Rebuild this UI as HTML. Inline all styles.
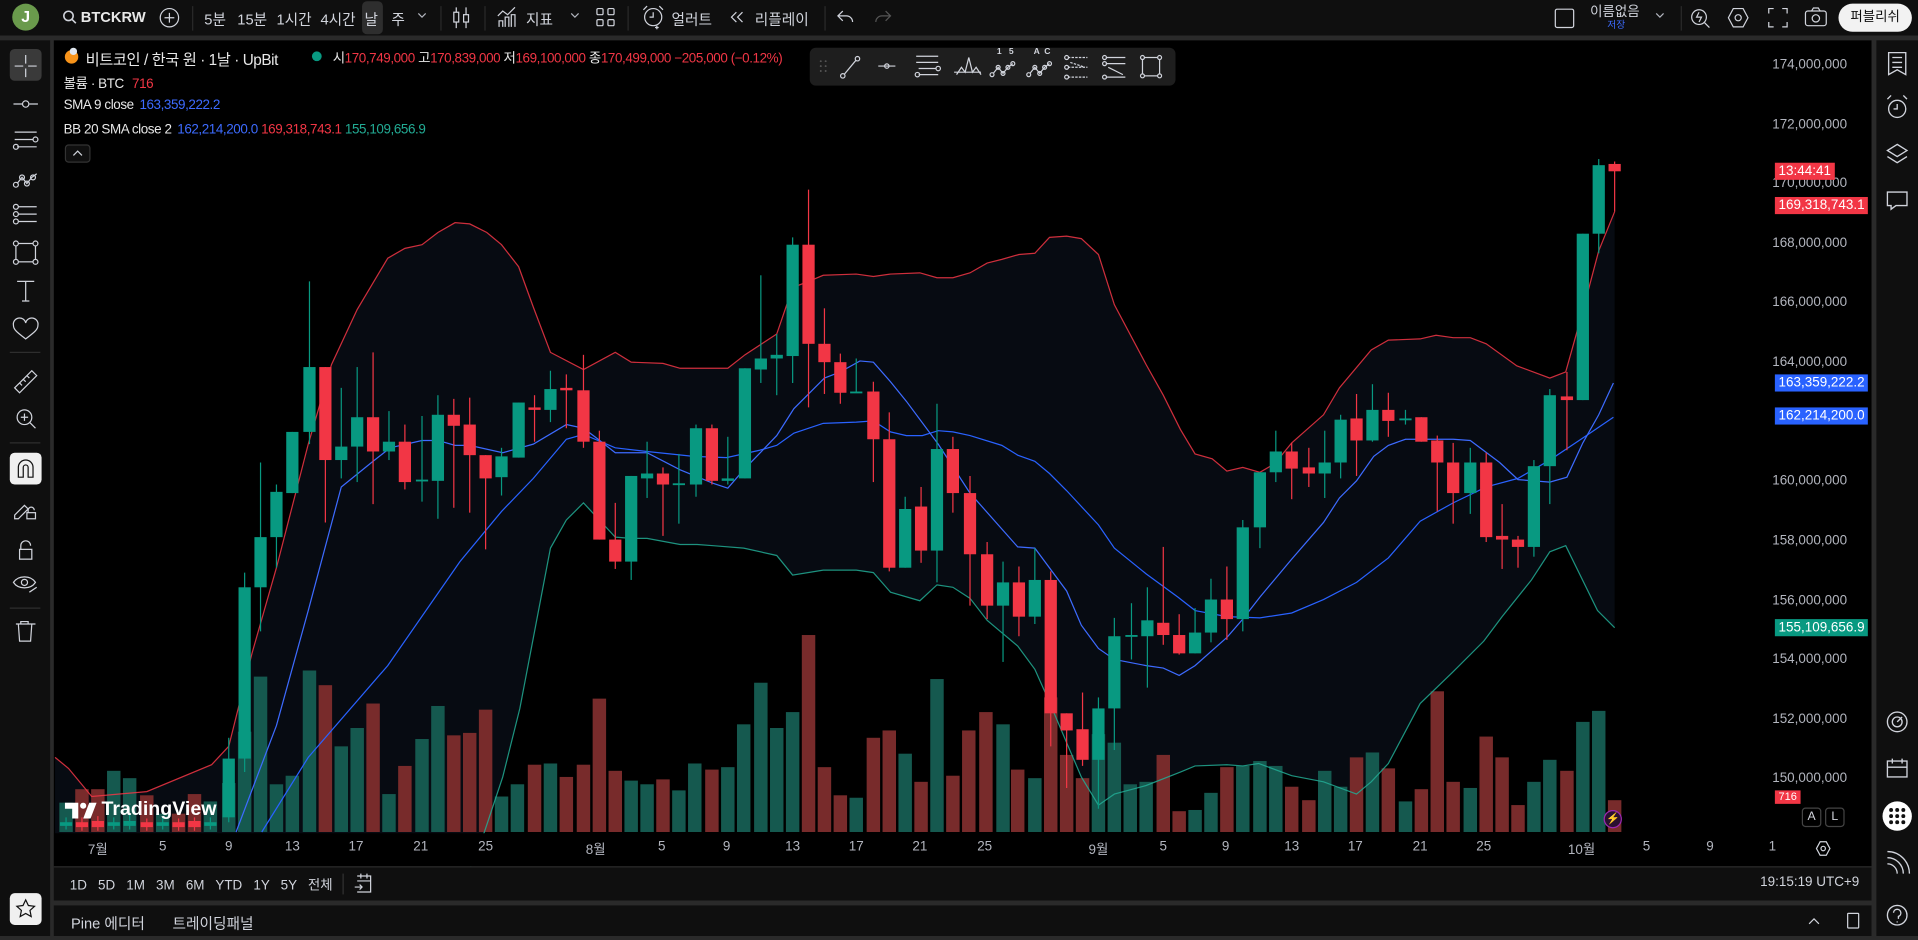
<!DOCTYPE html>
<html><head><meta charset="utf-8">
<style>
*{box-sizing:border-box;margin:0;padding:0}
html,body{width:1918px;height:936px;overflow:hidden;background:#2a2a2a}
#root{position:absolute;left:0;top:0;width:1568px;height:765px;transform:scale(1.22321,1.22353);transform-origin:0 0;background:#2a2a2a;font-family:"Liberation Sans","Noto Sans CJK KR",sans-serif;color:#d1d4dc;font-size:12px}
.abs{position:absolute}
.top{left:0;top:0;width:1568px;height:29px;background:#0f0f0f}
.left{left:0;top:33px;width:41px;height:732px;background:#0f0f0f}
.right{left:1534px;top:33px;width:34px;height:732px;background:#0f0f0f}
.chart{left:44px;top:33px;width:1486px;height:675px;background:#000;overflow:hidden}
.bbar{left:44px;top:708px;width:1486px;height:28px;background:#0f0f0f;border-top:1px solid #2a2a2a}
.panel{left:44px;top:740px;width:1486px;height:25px;background:#0f0f0f}
.t{position:absolute;white-space:nowrap}
.pl{position:absolute;right:20px;font-size:11px;color:#b2b5be;text-align:right}
.badge{position:absolute;left:1451px;height:14px;font-size:11px;color:#fff;padding:0 3px;line-height:14px}
.tl{position:absolute;top:686px;font-size:11px;color:#b2b5be;transform:translateX(-50%)}
.sep{position:absolute;width:1px;height:20px;background:#2a2a2a;top:5px}
.lg{letter-spacing:-0.35px}
</style></head><body><div id="root">

<!-- TOP BAR -->
<div class="abs top">
 <div class="abs" style="left:10px;top:3px;width:22px;height:22px;border-radius:50%;background:#6a9a4c;color:#fff;font-size:13px;text-align:center;line-height:22px;font-weight:bold">J</div>
 <svg class="abs" style="left:51px;top:8px" width="12" height="12" viewBox="0 0 12 12"><circle cx="5" cy="5" r="3.8" fill="none" stroke="#d1d4dc" stroke-width="1.3"/><path d="M8 8l3 3" stroke="#d1d4dc" stroke-width="1.3"/></svg>
 <div class="t" style="left:66px;top:7px;font-weight:bold;font-size:12px;color:#e8e8e8">BTCKRW</div>
 <svg class="abs" style="left:130px;top:6px" width="17" height="17" viewBox="0 0 17 17"><circle cx="8.5" cy="8.5" r="7.5" fill="none" stroke="#d1d4dc"/><path d="M8.5 4.5v8M4.5 8.5h8" stroke="#d1d4dc"/></svg>
 <div class="sep" style="left:157px"></div>
 <div class="t" style="left:167px;top:7px">5분</div>
 <div class="t" style="left:194px;top:7px">15분</div>
 <div class="t" style="left:226px;top:7px">1시간</div>
 <div class="t" style="left:262px;top:7px">4시간</div>
 <div class="abs" style="left:296px;top:1px;width:17px;height:27px;background:#2e2e2e;border-radius:4px"></div>
 <div class="t" style="left:298px;top:7px">날</div>
 <div class="t" style="left:320px;top:7px">주</div>
 <svg class="abs" style="left:341px;top:10px" width="8" height="6"><path d="M1 1l3 3 3-3" fill="none" stroke="#b2b5be"/></svg>
 <div class="sep" style="left:360px"></div>
 <svg class="abs" style="left:369px;top:5px" width="16" height="19" viewBox="0 0 16 19"><path d="M4 1v17M12 1v17" stroke="#d1d4dc"/><rect x="2" y="5" width="4" height="8" fill="#0f0f0f" stroke="#d1d4dc"/><rect x="10" y="7" width="4" height="6" fill="#0f0f0f" stroke="#d1d4dc"/></svg>
 <div class="sep" style="left:396px"></div>
 <svg class="abs" style="left:406px;top:5px" width="18" height="18" viewBox="0 0 18 18"><path d="M1 8l4-4 4 3 6-6M2 17v-5h3v5M7 17V9h3v8M12 17V7h3v10" fill="none" stroke="#d1d4dc"/></svg>
 <div class="t" style="left:430px;top:7px">지표</div>
 <svg class="abs" style="left:466px;top:10px" width="8" height="6"><path d="M1 1l3 3 3-3" fill="none" stroke="#b2b5be"/></svg>
 <svg class="abs" style="left:487px;top:6px" width="16" height="16" viewBox="0 0 16 16"><rect x="1" y="1" width="5" height="5" rx="1" fill="none" stroke="#d1d4dc"/><rect x="10" y="1" width="5" height="5" rx="1" fill="none" stroke="#d1d4dc"/><rect x="1" y="10" width="5" height="5" rx="1" fill="none" stroke="#d1d4dc"/><rect x="10" y="10" width="5" height="5" rx="1" fill="none" stroke="#d1d4dc"/></svg>
 <div class="sep" style="left:513px"></div>
 <svg class="abs" style="left:524px;top:4px" width="20" height="20" viewBox="0 0 20 20"><circle cx="10" cy="10" r="7" fill="none" stroke="#d1d4dc"/><path d="M10 6v4h-3M2 4l3-3M18 4l-3-3M13 17v3M11.5 18.5h3" fill="none" stroke="#d1d4dc"/></svg>
 <div class="t" style="left:549px;top:7px">얼러트</div>
 <svg class="abs" style="left:597px;top:9px" width="12" height="10"><path d="M5 1L1 5l4 4M10 1L6 5l4 4" fill="none" stroke="#d1d4dc"/></svg>
 <div class="t" style="left:617px;top:7px">리플레이</div>
 <div class="sep" style="left:674px"></div>
 <svg class="abs" style="left:684px;top:8px" width="14" height="12"><path d="M5 1L1 5l4 4M1 5h7a5 5 0 0 1 5 5" fill="none" stroke="#d1d4dc"/></svg>
 <svg class="abs" style="left:715px;top:8px" width="14" height="12"><path d="M9 1l4 4-4 4M13 5H6a5 5 0 0 0-5 5" fill="none" stroke="#555"/></svg>

 <div class="abs" style="left:1271px;top:7px;width:16px;height:16px;border:1px solid #d1d4dc;border-radius:2px"></div>
 <div class="t" style="left:1300px;top:1px;font-size:11px">이름없음</div>
 <div class="t" style="left:1314px;top:16px;font-size:8px;line-height:9px;color:#3d6bff">저장</div>
 <svg class="abs" style="left:1353px;top:10px" width="8" height="6"><path d="M1 1l3 3 3-3" fill="none" stroke="#b2b5be"/></svg>
 <div class="sep" style="left:1374px"></div>
 <svg class="abs" style="left:1381px;top:5px" width="18" height="19" viewBox="0 0 18 19"><circle cx="8" cy="9" r="6" fill="none" stroke="#d1d4dc"/><path d="M8 5l-2 4h4l-2 4M12.5 13.5l4 4" fill="none" stroke="#d1d4dc"/></svg>
 <svg class="abs" style="left:1412px;top:5px" width="18" height="19" viewBox="0 0 18 19"><path d="M5 2h8l4 7.5-4 7.5H5L1 9.5z" fill="none" stroke="#d1d4dc"/><circle cx="9" cy="9.5" r="2.5" fill="none" stroke="#d1d4dc"/></svg>
 <svg class="abs" style="left:1445px;top:6px" width="17" height="17" viewBox="0 0 17 17"><path d="M1 5V1h4M12 1h4v4M16 12v4h-4M5 16H1v-4" fill="none" stroke="#d1d4dc"/></svg>
 <svg class="abs" style="left:1475px;top:5px" width="19" height="18" viewBox="0 0 19 18"><rect x="1" y="4" width="17" height="12" rx="2" fill="none" stroke="#d1d4dc"/><path d="M6 4l1.5-2.5h4L13 4" fill="none" stroke="#d1d4dc"/><circle cx="9.5" cy="10" r="3" fill="none" stroke="#d1d4dc"/></svg>
 <div class="abs" style="left:1503px;top:3px;width:60px;height:23px;border-radius:12px;background:#f2f2f2;color:#111;font-size:11px;text-align:center;line-height:23px">퍼블리쉬</div>
</div>

<!-- LEFT TOOLBAR -->
<div class="abs left">
 <div class="abs" style="left:8px;top:7px;width:26px;height:26px;background:#3a3a3a;border-radius:4px"></div>
 <svg class="abs" style="left:0;top:0" width="41" height="732" viewBox="0 0 41 732" fill="none" stroke="#d1d4dc" stroke-width="1">
  <path d="M21 12v7M21 23v7M12 21h7M23 21h7"/>
  <path d="M11 52h7M24 52h7"/><circle cx="21" cy="52" r="2.6"/>
  <path d="M12 75h18M12 81h15M14 87h16"/><circle cx="29" cy="81" r="2"/><circle cx="13" cy="87" r="2"/>
  <path d="M14 117l4-5 4 5 4-5 4-3"/><circle cx="13" cy="118" r="2"/><circle cx="18" cy="112" r="2"/><circle cx="22" cy="117" r="2"/><circle cx="27" cy="112" r="2"/>
  <path d="M15 136h15M15 142h15M15 148h15"/><circle cx="13" cy="136" r="2"/><circle cx="13" cy="142" r="2"/><circle cx="13" cy="148" r="2"/>
  <rect x="13" y="166" width="16" height="15"/><circle cx="13" cy="166" r="2" fill="#0f0f0f"/><circle cx="29" cy="166" r="2" fill="#0f0f0f"/><circle cx="13" cy="181" r="2" fill="#0f0f0f"/><circle cx="29" cy="181" r="2" fill="#0f0f0f"/>
  <path d="M14 197h14M21 197v16M18 213h6"/>
  <path d="M21 244c-5-4-10-7-10-11a5 5 0 0 1 10-2a5 5 0 0 1 10 2c0 4-5 7-10 11z"/>
  <path d="M8 255h25" stroke="#2e2e2e"/>
  <path d="M12 284l14-14 4 4-14 14zM16 280l2 2M19 277l2 2M22 274l2 2"/>
  <circle cx="20" cy="308" r="6"/><path d="M17 308h6M20 305v6M24 312l5 5"/>
  <path d="M8 329h25" stroke="#2e2e2e"/>
 </svg>
 <div class="abs" style="left:8px;top:337px;width:26px;height:26px;background:#f0f0f0;border-radius:4px"></div>
 <svg class="abs" style="left:0;top:0" width="41" height="732" viewBox="0 0 41 732" fill="none" stroke="#d1d4dc" stroke-width="1">
  <path d="M15 357v-8a6 6 0 0 1 12 0v8h-4v-8a2 2 0 0 0-4 0v8z" stroke="#111"/>
  <path d="M12 388l8-8 3 3-8 8h-3z"/><rect x="22" y="386" width="7" height="5"/><path d="M23 386v-2a2.5 2.5 0 0 1 5 0"/>
  <rect x="16" y="416" width="10" height="8"/><path d="M17 416v-3a4 4 0 0 1 8 0"/>
  <path d="M11 443c4-6 14-6 18 0c-4 6-14 6-18 0z"/><circle cx="20" cy="443" r="2.5"/><path d="M24 451l6-4"/>
  <path d="M8 464h25" stroke="#2e2e2e"/>
  <path d="M13 477h16M17 477v-2h6v2M15 477l1 14h9l1-14"/>
 </svg>
 <div class="abs" style="left:8px;top:697px;width:26px;height:26px;background:#f0f0f0;border-radius:4px"></div>
 <svg class="abs" style="left:12px;top:701px" width="18" height="18" viewBox="0 0 18 18"><path d="M9 1.5l2.2 4.6 5 .6-3.7 3.4 1 5-4.5-2.5-4.5 2.5 1-5L1.8 6.7l5-.6z" fill="none" stroke="#111"/></svg>
</div>

<!-- RIGHT TOOLBAR -->
<div class="abs right">
 <svg width="34" height="732" viewBox="0 0 34 732" fill="none" stroke="#d1d4dc" stroke-width="1.1">
  <path d="M10 10h14v18l-7-4-7 4zM13 14h8M13 18h8M13 22h8"/>
  <circle cx="17" cy="56" r="7"/><path d="M17 52v4h-3M9 48l3-3M25 48l-3-3"/>
  <path d="M17 85l8 5-8 5-8-5zM9 95l8 5 8-5"/>
  <path d="M9 124h16v11h-9l-4 3v-3H9z"/>
  <circle cx="17" cy="557" r="8"/><circle cx="17" cy="557" r="4"/><path d="M17 557l4-4"/>
  <rect x="9" y="589" width="16" height="13"/><path d="M9 594h16M13 587v4M21 587v4"/>
  <path d="M9 673a8 8 0 0 1 8 8M9 668a13 13 0 0 1 13 13M9 663a18 18 0 0 1 18 18"/>
  <circle cx="17" cy="715" r="8"/><path d="M14 713a3 3 0 1 1 4 3v2M17 720v1"/>
 </svg>
 <div class="abs" style="left:5px;top:622px;width:24px;height:24px;border-radius:50%;background:#fff"></div>
 <svg class="abs" style="left:9px;top:626px" width="16" height="16"><g fill="#111"><circle cx="3" cy="3" r="1.6"/><circle cx="8" cy="3" r="1.6"/><circle cx="13" cy="3" r="1.6"/><circle cx="3" cy="8" r="1.6"/><circle cx="8" cy="8" r="1.6"/><circle cx="13" cy="8" r="1.6"/><circle cx="3" cy="13" r="1.6"/><circle cx="8" cy="13" r="1.6"/><circle cx="13" cy="13" r="1.6"/></g></svg>
</div>

<!-- CHART -->
<div class="abs chart">
 <svg id="cs" class="abs" style="left:-44px;top:-33px" width="1486" height="708" viewBox="0 0 1486 708"></svg>

 <div class="abs" style="left:9px;top:8px;width:11px;height:11px;border-radius:50%;background:#f7931a"></div>
 <div class="abs" style="left:13px;top:6px;width:6px;height:6px;border-radius:50%;background:#dfe6ef"></div>
 <div class="t lg" style="left:26px;top:5px;font-size:12.5px;color:#e8e8e8">비트코인 / 한국 원 · 1날 · UpBit</div>
 <div class="abs" style="left:211px;top:9px;width:8px;height:8px;border-radius:50%;background:#089981"></div>
 <div class="t lg" style="left:228px;top:6px;font-size:11px;color:#e8e8e8">시<span style="color:#f23645">170,749,000</span> 고<span style="color:#f23645">170,839,000</span> 저<span style="color:#f23645">169,100,000</span> 종<span style="color:#f23645">170,499,000</span> <span style="color:#f23645">−205,000 (−0.12%)</span></div>
 <div class="t lg" style="left:8px;top:27px;font-size:11px;color:#e8e8e8">볼륨 · BTC <span style="color:#f23645;margin-left:4px">716</span></div>
 <div class="t lg" style="left:8px;top:47px;font-size:11px;color:#e8e8e8">SMA 9 close <span style="color:#3d6bff;margin-left:2px">163,359,222.2</span></div>
 <div class="t lg" style="left:8px;top:67px;font-size:11px;color:#e8e8e8">BB 20 SMA close 2 <span style="color:#3d6bff;margin-left:2px">162,214,200.0</span> <span style="color:#f23645">169,318,743.1</span> <span style="color:#22ab94">155,109,656.9</span></div>
 <div class="abs" style="left:9px;top:85px;width:21px;height:15px;border:1px solid #333;border-radius:3px;background:#0f0f0f"></div>
 <svg class="abs" style="left:15px;top:89px" width="9" height="6"><path d="M1 5l3.5-3.5L8 5" fill="none" stroke="#d1d4dc"/></svg>

 <div class="abs" style="left:618px;top:6px;width:299px;height:31px;background:#1e1e1e;border-radius:5px"></div>
 <svg class="abs" style="left:618px;top:6px" width="299" height="31" viewBox="0 0 299 31" fill="none" stroke="#d1d4dc" stroke-width="1">
  <g fill="#555" stroke="none"><circle cx="9" cy="11" r=".8"/><circle cx="13" cy="11" r=".8"/><circle cx="9" cy="15" r=".8"/><circle cx="13" cy="15" r=".8"/><circle cx="9" cy="19" r=".8"/><circle cx="13" cy="19" r=".8"/></g>
  <path d="M28 22l10-12"/><circle cx="27" cy="23" r="1.8"/><circle cx="39" cy="9" r="1.8"/>
  <path d="M56 15h14"/><circle cx="63" cy="15" r="1.8"/>
  <path d="M87 7h18M87 12h18M89 22h16M89 17h14"/><circle cx="105" cy="17" r="1.8"/><circle cx="88" cy="22" r="1.8"/>
  <path d="M120 22l4-6 3 4 3-12 3 12 3-4 4 6M118 20h22"/>
  <path d="M150 21l4-5 4 5 4-5 4-3"/><circle cx="149" cy="22" r="1.6"/><circle cx="154" cy="16" r="1.6"/><circle cx="158" cy="21" r="1.6"/><circle cx="162" cy="16" r="1.6"/><circle cx="166" cy="13" r="1.6"/>
  <path d="M180 21l4-5 4 5 4-5 4-3"/><circle cx="179" cy="22" r="1.6"/><circle cx="184" cy="16" r="1.6"/><circle cx="188" cy="21" r="1.6"/><circle cx="192" cy="16" r="1.6"/><circle cx="196" cy="13" r="1.6"/>
  <path d="M211 8h16M211 16h16M211 24h16M213 12l12 4" stroke-dasharray="2 1"/><circle cx="210" cy="8" r="1.6"/><circle cx="210" cy="16" r="1.6"/><circle cx="210" cy="24" r="1.6"/>
  <path d="M242 8h16M242 13h16M242 24h16M244 16l12 6" /><circle cx="241" cy="8" r="1.6"/><circle cx="241" cy="13" r="1.6"/><circle cx="241" cy="24" r="1.6"/>
  <rect x="272" y="8" width="14" height="15"/><circle cx="272" cy="8" r="1.6" fill="#1e1e1e"/><circle cx="286" cy="8" r="1.6" fill="#1e1e1e"/><circle cx="272" cy="23" r="1.6" fill="#1e1e1e"/><circle cx="286" cy="23" r="1.6" fill="#1e1e1e"/>
 </svg>
 <div class="t" style="left:771px;top:6px;font-size:7px;font-weight:bold">1 &nbsp; 5</div>
 <div class="t" style="left:801px;top:6px;font-size:7px;font-weight:bold">A &nbsp;C</div>

 <svg class="abs" style="left:9px;top:623px" width="26" height="13" viewBox="0 0 26 13"><path d="M0 0h11v13H6V5H0zM15 13l5-13h6l-5 13z" fill="#fff"/><circle cx="15" cy="2.5" r="2.5" fill="#fff"/></svg>
 <div class="t" style="left:39px;top:620px;font-size:16px;font-weight:bold;color:#fff">TradingView</div>

 <div class="pl" style="top:14px">174,000,000</div>
 <div class="pl" style="top:63px">172,000,000</div>
 <div class="pl" style="top:111px">170,000,000</div>
 <div class="pl" style="top:160px">168,000,000</div>
 <div class="pl" style="top:208px">166,000,000</div>
 <div class="pl" style="top:257px">164,000,000</div>
 <div class="pl" style="top:403px">158,000,000</div>
 <div class="pl" style="top:354px">160,000,000</div>
 <div class="pl" style="top:452px">156,000,000</div>
 <div class="pl" style="top:500px">154,000,000</div>
 <div class="pl" style="top:549px">152,000,000</div>
 <div class="pl" style="top:597px">150,000,000</div>
 <div class="badge" style="left:1407px;top:100px;background:#f23645">13:44:41</div>
 <div class="badge" style="left:1407px;top:128px;background:#f23645">169,318,743.1</div>
 <div class="badge" style="left:1407px;top:273px;background:#2962ff">163,359,222.2</div>
 <div class="badge" style="left:1407px;top:300px;background:#2962ff">162,214,200.0</div>
 <div class="badge" style="left:1407px;top:473px;background:#089981">155,109,656.9</div>
 <div class="badge" style="left:1407px;top:613px;background:#f23645;height:11px;line-height:11px;font-size:9px">716</div>
 <div class="abs" style="left:1429px;top:627px;width:16px;height:16px;border:1px solid #444;border-radius:3px;font-size:10px;text-align:center;line-height:14px;background:#000">A</div>
 <div class="abs" style="left:1448px;top:627px;width:16px;height:16px;border:1px solid #444;border-radius:3px;font-size:10px;text-align:center;line-height:14px;background:#000">L</div>
 <div class="abs" style="left:1267px;top:629px;width:15px;height:15px;border-radius:50%;border:1px solid #9c27b0;background:#2a1030;color:#c77dff;font-size:9px;text-align:center;line-height:13px">⚡</div>

 <div class="abs" style="left:0;top:648px;width:1486px;height:27px;background:#000"></div>
 <div class="tl" style="left:36px;top:653px">7월</div><div class="tl" style="left:89px;top:653px">5</div><div class="tl" style="left:143px;top:653px">9</div><div class="tl" style="left:195px;top:653px">13</div><div class="tl" style="left:247px;top:653px">17</div><div class="tl" style="left:300px;top:653px">21</div><div class="tl" style="left:353px;top:653px">25</div>
 <div class="tl" style="left:443px;top:653px">8월</div><div class="tl" style="left:497px;top:653px">5</div><div class="tl" style="left:550px;top:653px">9</div><div class="tl" style="left:604px;top:653px">13</div><div class="tl" style="left:656px;top:653px">17</div><div class="tl" style="left:708px;top:653px">21</div><div class="tl" style="left:761px;top:653px">25</div>
 <div class="tl" style="left:854px;top:653px">9월</div><div class="tl" style="left:907px;top:653px">5</div><div class="tl" style="left:958px;top:653px">9</div><div class="tl" style="left:1012px;top:653px">13</div><div class="tl" style="left:1064px;top:653px">17</div><div class="tl" style="left:1117px;top:653px">21</div><div class="tl" style="left:1169px;top:653px">25</div>
 <div class="tl" style="left:1249px;top:653px">10월</div><div class="tl" style="left:1302px;top:653px">5</div><div class="tl" style="left:1354px;top:653px">9</div><div class="tl" style="left:1405px;top:653px">1</div>
 <svg class="abs" style="left:1440px;top:654px" width="13" height="13" viewBox="0 0 13 13"><path d="M4 1h5l3 5.5-3 5.5H4L1 6.5z" fill="none" stroke="#d1d4dc"/><circle cx="6.5" cy="6.5" r="1.8" fill="none" stroke="#d1d4dc"/></svg>
</div>

<div class="abs bbar">
 <div class="t" style="left:13px;top:6px;font-size:11px;word-spacing:6px">1D 5D 1M 3M 6M YTD 1Y 5Y 전체</div>
 <div class="abs" style="left:236px;top:5px;width:1px;height:17px;background:#333"></div>
 <svg class="abs" style="left:245px;top:4px" width="15" height="17" viewBox="0 0 15 17"><path d="M3 3h11v13H3M3 7h11M6 1v4M11 1v4M1 12h6M5 10l2 2-2 2" fill="none" stroke="#d1d4dc"/></svg>
 <div class="t" style="right:10px;top:6px;font-size:11px">19:15:19 UTC+9</div>
</div>
<div class="abs panel">
 <div class="t" style="left:14px;top:6px;font-size:12px">Pine 에디터</div>
 <div class="t" style="left:97px;top:6px;font-size:12px">트레이딩패널</div>
 <svg class="abs" style="left:1434px;top:9px" width="10" height="7"><path d="M1 6l4-4 4 4" fill="none" stroke="#d1d4dc"/></svg>
 <div class="abs" style="left:1466px;top:6px;width:10px;height:13px;border:1px solid #d1d4dc;border-radius:1px"></div>
</div>
</div>

<script>
const ns="http://www.w3.org/2000/svg",svg=document.getElementById('cs');
const G="#089981",R="#f23645",VG="#15594f",VR="#782b2b";
function el(t,a){const e=document.createElementNS(ns,t);for(const k in a)e.setAttribute(k,a[k]);svg.appendChild(e);return e;}
const upper=[[45,619],[56,628],[75,651],[120,647],[173,625],[187,610],[206,534],[226,464],[252,363],[271,298],[292,253],[317,211],[331,203],[345,200],[358,190],[372,182],[384,183],[398,190],[410,200],[424,218],[436,251],[450,288],[477,302],[503,288],[516,296],[542,297],[556,301],[595,301],[609,290],[635,273],[648,235],[661,230],[673,225],[700,224],[714,226],[728,224],[752,223],[766,227],[779,227],[793,223],[807,215],[819,212],[833,208],[846,207],[858,194],[872,193],[884,195],[898,208],[911,249],[937,298],[951,323],[965,351],[977,371],[991,375],[1003,385],[1016,382],[1030,386],[1042,379],[1056,362],[1082,339],[1095,317],[1121,286],[1135,278],[1161,277],[1174,274],[1188,276],[1202,276],[1215,281],[1240,299],[1267,309],[1280,304],[1294,254],[1307,205],[1320,173]];
const lower=[[45,780],[300,760],[380,720],[396,680],[411,635],[425,579],[450,448],[463,425],[477,411],[490,425],[503,439],[516,440],[529,440],[556,445],[570,445],[583,446],[608,448],[635,454],[648,470],[673,466],[700,466],[714,468],[728,484],[752,491],[766,478],[779,480],[793,489],[807,507],[832,528],[846,547],[858,574],[872,607],[884,635],[898,658],[911,649],[937,642],[965,631],[977,626],[1003,625],[1016,626],[1029,624],[1056,634],[1082,639],[1109,649],[1121,639],[1135,624],[1161,575],[1188,549],[1213,524],[1228,504],[1252,474],[1267,451],[1280,446],[1306,499],[1320,513]];
const smaA=[[193,680],[226,593],[252,499],[279,398],[305,377],[319,366],[345,360],[358,360],[372,364],[384,364],[411,370],[436,363],[463,347],[477,350],[489,359],[503,370],[529,370],[556,384],[583,395],[595,399],[608,384],[635,356],[649,334],[674,309],[687,304],[703,295],[714,296],[728,312],[741,328],[767,363],[793,403],[832,447],[846,448],[872,483],[884,511],[898,530],[911,539],[937,544],[951,546],[964,552],[977,544],[1003,521],[1016,506],[1030,488],[1056,457],[1082,427],[1095,407],[1109,393],[1123,373],[1135,364],[1149,359],[1188,359],[1202,360],[1226,378],[1241,392],[1254,393],[1267,394],[1281,390],[1294,362],[1307,339],[1319,313]];
const basis=[[214,680],[252,619],[317,544],[376,459],[410,418],[436,391],[463,359],[477,355],[503,366],[529,369],[567,373],[594,374],[621,368],[635,364],[649,354],[673,346],[700,345],[714,344],[728,353],[741,356],[754,356],[767,352],[779,353],[793,356],[819,364],[832,372],[846,377],[858,387],[872,401],[898,429],[911,448],[937,469],[963,488],[977,499],[1003,504],[1030,505],[1056,501],[1082,490],[1109,476],[1135,456],[1161,426],[1188,411],[1215,398],[1241,391],[1267,376],[1294,358],[1319,341]];
const P=a=>a.map(p=>p.join(',')).join(' ');
el('polygon',{points:P(upper)+' '+P(lower.slice().reverse()),fill:'#070b12'});
const vols=[[54,656,0],[67,645,1],[80,645,1],[93,630,0],[106,636,0],[120,650,1],[133,665,0],[146,665,1],[159,649,1],[172,655,0],[187,640,0],[200,598,0],[213,553,0],[226,641,0],[239,634,0],[253,548,0],[266,560,1],[279,610,0],[292,595,0],[305,575,1],[318,649,0],[331,626,1],[345,604,0],[358,577,0],[371,601,1],[384,599,1],[397,580,1],[410,651,0],[423,641,0],[437,625,1],[450,624,0],[463,635,1],[477,625,1],[490,571,1],[503,630,1],[516,638,0],[529,641,0],[542,637,1],[555,646,0],[568,624,0],[582,629,1],[595,627,0],[608,592,0],[622,558,0],[635,595,0],[648,582,0],[661,519,1],[674,627,1],[687,650,1],[700,652,0],[714,603,1],[727,597,1],[740,616,0],[753,639,1],[766,555,0],[779,634,1],[792,597,1],[806,582,1],[820,592,0],[832,629,1],[846,636,0],[859,570,1],[872,617,1],[885,636,1],[898,600,0],[911,607,0],[924,641,0],[937,639,0],[951,617,1],[964,663,1],[977,662,0],[990,648,0],[1003,627,1],[1016,626,0],[1030,622,0],[1043,626,0],[1056,643,1],[1070,654,1],[1083,630,0],[1096,643,0],[1109,619,1],[1122,615,0],[1135,628,1],[1149,655,0],[1162,645,1],[1175,565,1],[1188,639,1],[1202,644,0],[1215,602,1],[1228,619,1],[1241,658,1],[1254,639,0],[1267,621,0],[1281,630,1],[1294,590,0],[1307,581,0],[1320,654,1]];
vols.forEach(v=>el('rect',{x:v[0]-5.5,y:v[1],width:11,height:680-v[1],fill:v[2]?VR:VG}));
el('polyline',{points:P(upper),fill:'none',stroke:R,'stroke-width':1,opacity:.85});
el('polyline',{points:P(lower),fill:'none',stroke:'#22ab94','stroke-width':1,opacity:.85});
el('polyline',{points:P(basis),fill:'none',stroke:'#2962ff','stroke-width':1});
el('polyline',{points:P(smaA),fill:'none',stroke:'#3d6bff','stroke-width':1});
const c=[[54,672,675,668,678,0],[67,672,676,668,679,1],[80,671,676,667,679,1],[93,672,675,668,678,0],[106,671,675,665,678,0],[120,672,676,669,679,1],[133,672,675,668,678,0],[146,672,676,669,679,1],[159,671,676,668,679,1],[172,672,675,668,678,0],
[187,620,668,603,672,0],[200,480,620,468,631,0],[213,439,480,378,516,0],[226,402,439,396,464,0],[239,353,403,353,403,0],[253,300,353,230,363,0],[266,300,376,300,427,1],[279,365,376,317,391,0],[292,341,365,300,394,0],[305,341,369,288,412,1],[318,361,369,336,376,0],[331,361,394,347,400,1],[345,392,393,340,410,0],[358,339,393,323,424,0],[371,339,348,326,415,1],[384,347,372,325,419,1],[397,372,391,372,449,1],[410,373,390,366,405,0],[424,329,374,329,374,0],[437,333,335,323,361,1],[450,318,335,303,345,0],[463,317,319,306,350,1],[477,319,361,290,366,1],[490,361,441,352,441,1],[503,441,459,411,465,1],[516,389,459,389,474,0],[529,387,391,361,407,0],[542,387,396,382,438,1],[555,395,396,371,428,0],[569,350,396,347,406,0],[582,350,393,347,396,1],[595,391,393,357,396,0],[609,301,391,301,391,0],[622,293,302,225,313,0],[635,290,293,273,323,0],[648,200,291,194,313,0],[661,200,281,155,333,1],[674,281,296,252,322,1],[687,296,321,289,330,1],[700,320,321,293,321,0],[714,320,359,312,394,1],[727,359,464,337,467,1],[740,416,464,406,464,0],[753,414,450,398,460,1],[766,367,450,330,476,0],[779,367,403,357,419,1],[793,403,453,389,495,1],[807,453,495,443,506,1],[820,476,495,459,541,0],[833,476,504,463,520,1],[846,474,504,448,510,0],[859,474,583,467,610,1],[872,583,597,583,644,1],[885,596,621,566,626,1],[898,579,621,570,661,0],[911,520,579,505,613,0],[925,519,520,493,539,0],[938,507,520,480,562,0],[951,509,519,447,527,1],[964,519,534,502,535,1],[977,517,534,497,534,0],[990,490,517,473,525,0],[1003,490,506,463,523,1],[1016,431,506,425,516,0],[1030,386,431,386,448,0],[1043,369,386,352,394,0],[1056,369,383,362,408,1],[1070,382,387,366,398,1],[1083,378,387,352,407,0],[1096,343,378,339,391,0],[1109,342,360,322,389,1],[1122,335,360,314,361,0],[1135,335,344,321,357,1],[1149,342,343,335,347,0],[1162,341,361,341,361,1],[1175,360,378,356,418,1],[1188,378,403,362,428,1],[1202,378,403,366,420,0],[1215,378,439,370,443,1],[1228,438,441,412,465,1],[1241,441,447,438,464,1],[1254,381,447,376,455,0],[1267,323,381,318,412,0],[1281,324,327,304,368,1],[1294,191,327,191,327,0],[1307,135,191,130,207,0],[1320,134,140,132,173,1]];
c.forEach(k=>{const col=k[5]?R:G;el('line',{x1:k[0],x2:k[0],y1:k[3],y2:k[4],stroke:col,'stroke-width':1});el('rect',{x:k[0]-5,y:k[1],width:10,height:Math.max(1.5,k[2]-k[1]),fill:col});});
</script>
</body></html>
